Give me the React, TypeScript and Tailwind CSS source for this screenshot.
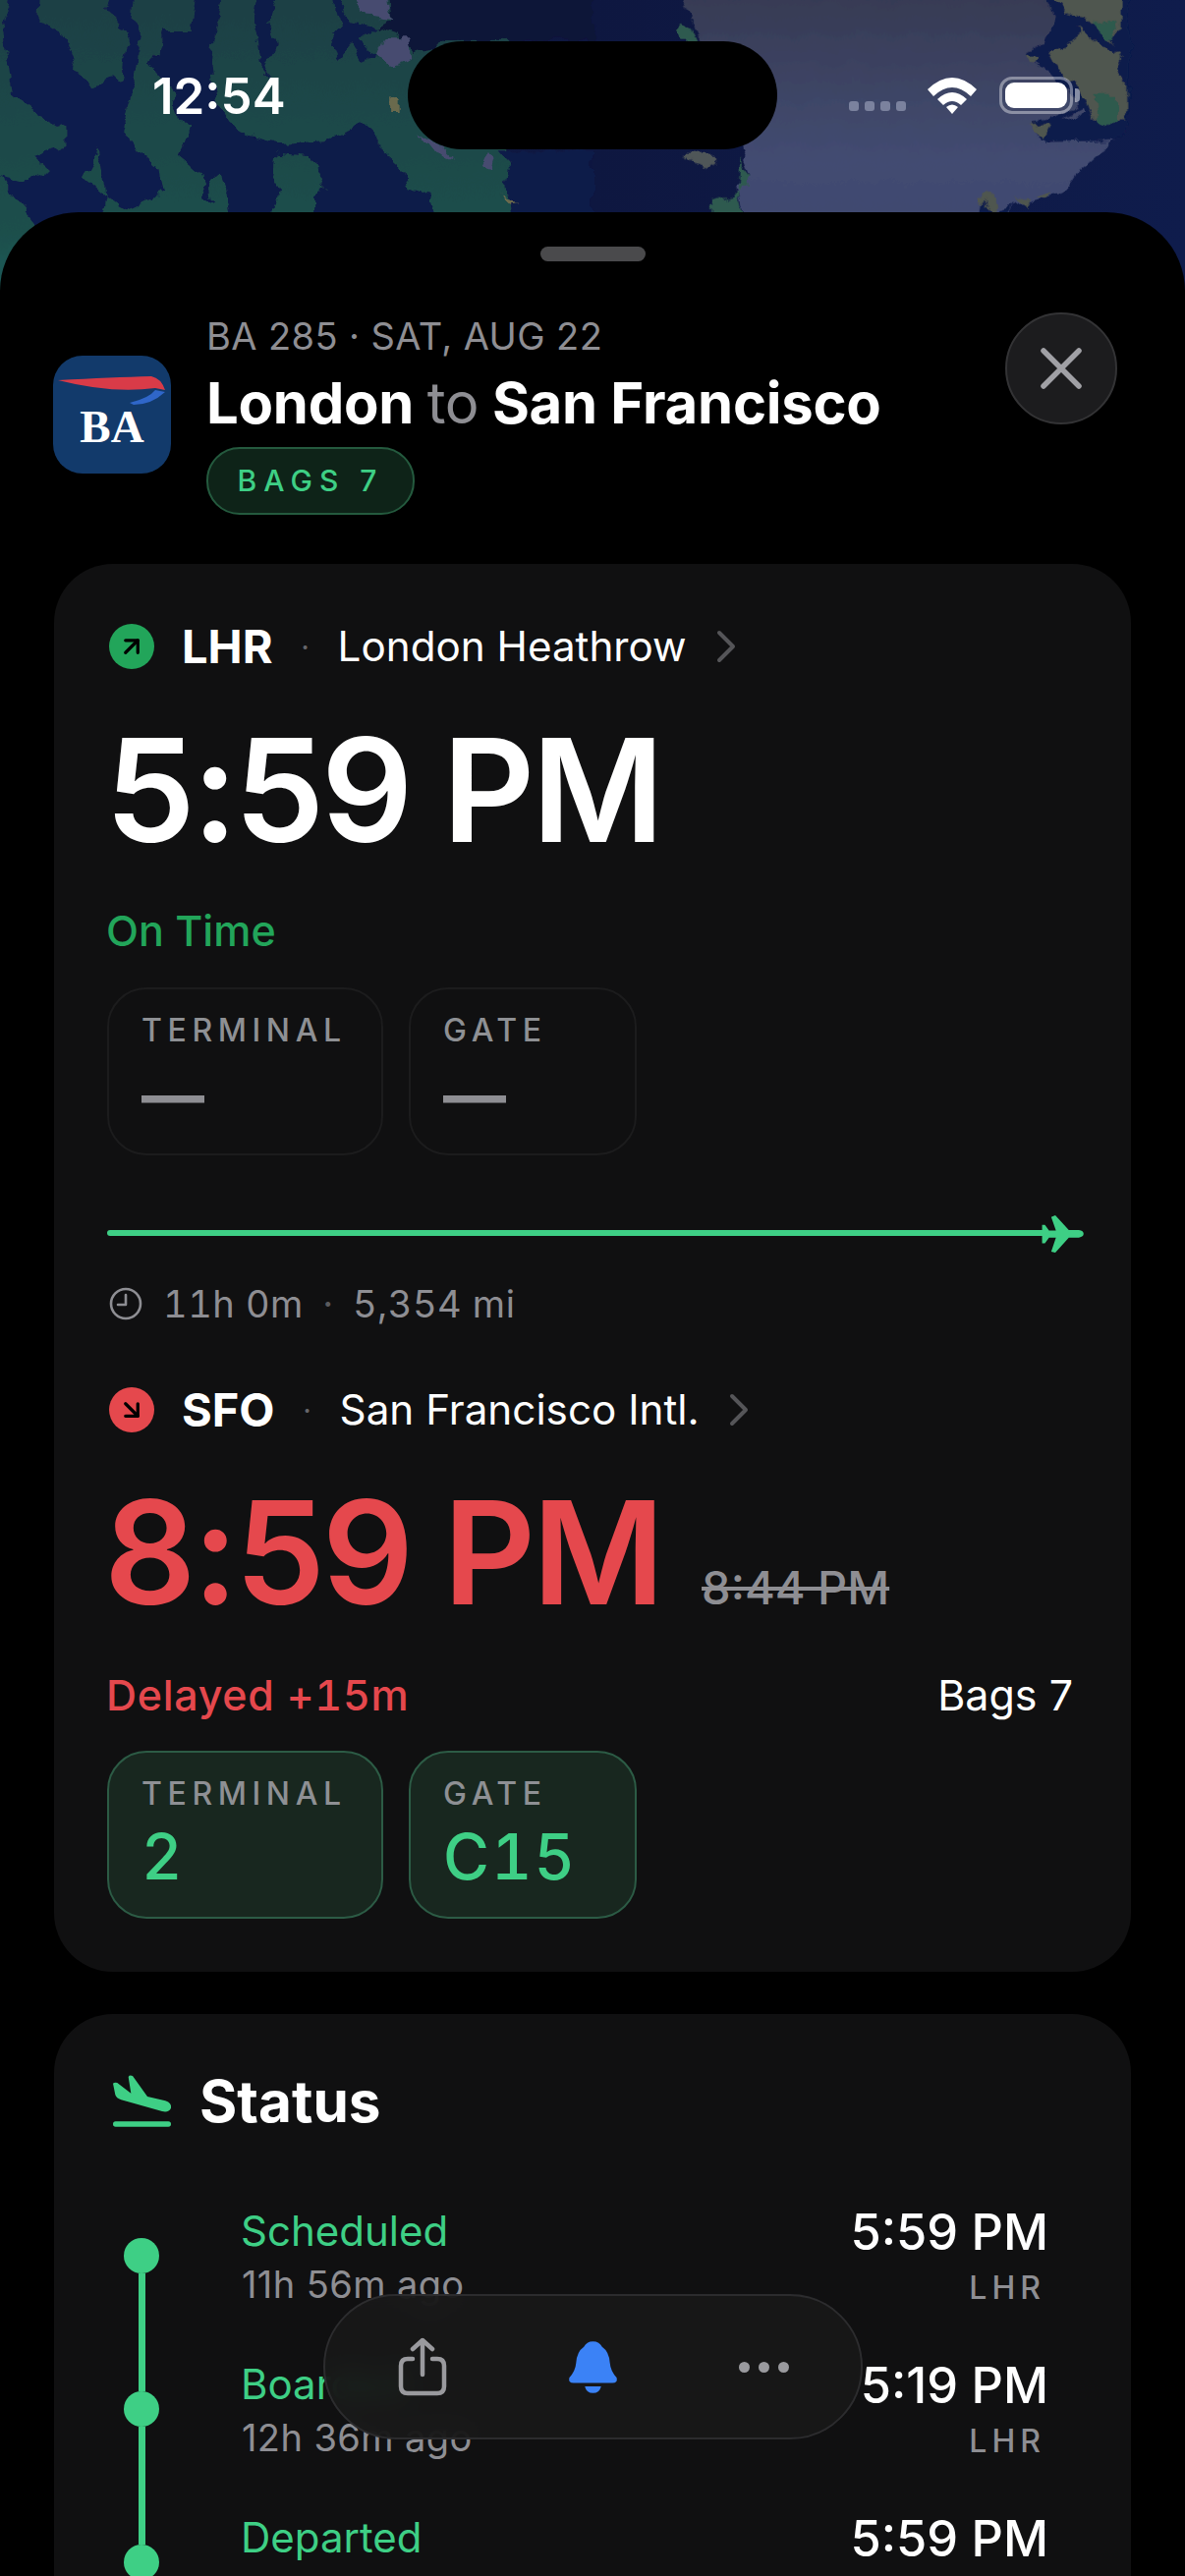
import React from "react";
import { ArrowUpRight, ArrowDownRight } from "lucide-react";

function MapBackdrop() {
  return (
    <svg className="absolute left-0 top-0" width="1206" height="310" viewBox="0 0 1206 310">
      <defs>
        <linearGradient id="lav" x1="0" y1="0" x2="0" y2="1">
          <stop offset="0" stopColor="#363a52" />
          <stop offset="0.7" stopColor="#434c72" />
          <stop offset="1" stopColor="#3f4870" />
        </linearGradient>
        <linearGradient id="navy" x1="0" y1="0" x2="1" y2="0">
          <stop offset="0" stopColor="#111c48" />
          <stop offset="0.5" stopColor="#0e1740" />
          <stop offset="1" stopColor="#0f1c4c" />
        </linearGradient>
        <linearGradient id="land" x1="0" y1="0" x2="0" y2="1">
          <stop offset="0" stopColor="#1b3f44" />
          <stop offset="0.75" stopColor="#1d4f4c" />
          <stop offset="1" stopColor="#1d5f5c" />
        </linearGradient>
        <filter id="rough" x="-5%" y="-5%" width="110%" height="110%">
          <feTurbulence type="fractalNoise" baseFrequency="0.05" numOctaves="4" seed="7" />
          <feDisplacementMap in="SourceGraphic" scale="16" xChannelSelector="R" yChannelSelector="G" />
        </filter>
      </defs>
      <rect width="1206" height="310" fill="url(#navy)" />
      <g filter="url(#rough)">
        <g transform="scale(0.3846 0.3333)">
          <rect x="-40" y="-40" width="1390" height="1000" fill="url(#land)" />
          <path fill="#0d1438" d="M1030 -40 L1568 -40 L1568 125 L1200 125 L1100 170 L1060 110 L990 80 L1040 60 Z" />
          <path fill="#101a48" d="M1320 460 L1568 460 L1568 960 L1370 960 L1340 570 L1350 500 Z" />
          <path fill="#111d4e" d="M10 60 L40 -40 L110 -40 L105 70 L150 90 L190 180 L240 265 L320 240 L330 150 L345 130 L310 60 L270 40 L300 -40 L360 -40 L350 60 L375 130 L360 220 L340 300 L320 400 L370 470 L420 520 L430 590 L330 640 L280 600 L260 460 L220 540 L280 600 L260 720 L120 720 L30 600 L0 540 L60 560 L130 520 L90 480 L170 450 L170 400 L60 320 L40 290 L20 150 Z" />
          <path fill="#0f1a4a" d="M430 90 L500 90 L520 -40 L600 -40 L570 100 L560 200 L570 300 L620 400 L750 440 L860 430 L960 370 L1000 410 L1000 450 L1070 520 L1080 580 L1140 600 L1160 720 L830 720 L830 600 L860 580 L820 480 L730 470 L720 540 L740 580 L700 720 L620 720 L590 530 L550 550 L560 620 L545 600 L530 530 L470 470 L500 400 L470 360 L460 280 L400 200 L430 130 Z" />
          <path fill="#0f1a4a" d="M690 -40 L740 -40 L710 60 L730 130 L700 200 L720 240 L690 200 L680 120 L670 70 Z" />
          <path fill="#0f1a4a" d="M870 -40 L900 10 L920 70 L990 80 L950 120 L1000 170 L960 190 L930 130 L890 180 L870 130 L900 90 Z" />
          <path fill="#464c70" d="M920 -40 L1020 -40 L1040 60 L980 50 Z" />
          <path fill="#464c70" d="M1020 115 L1080 115 L1090 180 L1030 205 L1000 170 Z" />
          <path fill="#464c70" d="M1100 400 L1160 440 L1200 485 L1140 460 Z" />
          <path fill="#464c70" d="M1290 460 L1310 480 L1300 520 L1270 510 Z" />
          <path fill="#6b6a4e" d="M1030 295 L1060 300 L1060 345 L1030 345 Z" />
          <path fill="#6b6a4e" d="M1325 605 L1365 615 L1340 620 Z" />
        </g>
        <g transform="translate(603 0) scale(0.3846 0.3333)">
          <path fill="url(#lav)" d="M225 -40 L1190 -40 L1220 60 L1200 130 L1150 160 L1190 220 L1240 280 L1290 260 L1300 350 L1160 380 L1190 430 L1390 425 L1340 470 L1280 530 L1240 590 L1110 630 L1090 720 L405 720 L380 560 L420 540 L390 450 L290 130 Z" />
          <path fill="#4f5658" d="M240 470 L330 470 L330 500 L295 520 L265 510 Z" />
          <path fill="#2f5a50" d="M390 490 L420 540 L370 600 L320 620 L320 720 L405 720 L385 610 Z" />
          <path fill="#2f5a50" d="M240 60 L265 85 L280 125 L230 125 L215 90 Z" />
          <path fill="#0f1c4c" d="M1190 -40 L1420 -40 L1420 380 L1390 425 L1190 430 L1160 380 L1300 350 L1290 260 L1240 280 L1190 220 L1150 160 L1200 130 L1220 60 Z" />
          <path fill="#50564f" d="M1190 -40 L1400 -40 L1400 100 L1370 120 L1400 170 L1380 210 L1415 260 L1415 370 L1320 370 L1290 260 L1240 230 L1210 160 L1270 130 L1300 100 Z" />
          <path fill="#2d5a4e" d="M1330 290 L1385 290 L1385 375 L1335 375 Z" />
          <path fill="#2d5a4e" d="M1320 70 L1390 60 L1380 120 L1340 120 Z" />
          <path fill="#0f1c4c" d="M1210 30 L1300 50 L1400 160 L1375 170 L1290 80 L1215 50 Z" />
          <path fill="#0f1c4c" d="M1170 170 L1210 200 L1290 250 L1300 330 L1190 390 L1215 440 L1185 420 L1180 370 L1280 330 L1270 270 L1200 230 Z" />
          <path fill="#50564f" d="M1150 160 L1180 175 L1165 195 Z" />
          <path fill="#50564f" d="M1155 385 L1215 380 L1195 425 Z" />
          <path fill="#50564f" d="M1025 600 L1055 590 L1065 640 L1040 650 Z" />
          <path fill="#50564f" d="M1120 610 L1160 605 L1150 630 Z" />
          <path fill="#50564f" d="M1180 595 L1210 590 L1190 610 Z" />
          <path fill="#0f1c4c" d="M1035 610 L1060 640 L1110 625 L1100 660 L1030 660 Z" />
        </g>
      </g>
    </svg>
  );
}

function StatusBar() {
  return (
    <div className="relative flex items-center h-[110px] mt-[42px]">
      <div className="w-[415px] shrink-0 pl-[155px] text-[51px] leading-none font-semibold text-white">12:54</div>
      <div className="w-[376px] h-[110px] rounded-[55px] bg-black shrink-0" />
      <div className="flex items-end gap-[6px] ml-[73px] mt-[21px]">
        <span className="w-[10px] h-[10px] rounded-[3px] bg-[#7b829e]" />
        <span className="w-[10px] h-[10px] rounded-[3px] bg-[#7b829e]" />
        <span className="w-[10px] h-[10px] rounded-[3px] bg-[#7b829e]" />
        <span className="w-[10px] h-[10px] rounded-[3px] bg-[#7b829e]" />
      </div>
      <svg className="ml-[22px]" width="50" height="38" viewBox="0 0 50 38" fill="white">
        <path d="M0 13 Q25 -11 50 13 L44 20 Q25 2 6 20 Z" />
        <path d="M10 23 Q25 9 40 23 L34 29 Q25 21 16 29 Z" />
        <path d="M19 31 Q25 26 31 31 L25 38 Z" />
      </svg>
      <div className="relative ml-[23px] w-[75px] h-[38px] rounded-[13px] border-[3px] border-white/40 p-[3px]">
        <div className="w-full h-full rounded-[9px] bg-white" />
        <span className="absolute right-[-10px] top-[9px] w-[5px] h-[14px] rounded-r-[4px] bg-white/50" />
      </div>
    </div>
  );
}

function BaLogo() {
  return (
    <div className="relative mt-[44px] w-[120px] h-[120px] shrink-0 rounded-[30px] bg-[#123a6b] flex items-end justify-center pb-[24px] overflow-hidden">
      <svg className="absolute left-0 top-0" width="120" height="120" viewBox="0 0 120 120">
        <path fill="#d93b48" d="M5 25 Q60 22 100 21 Q110 23 114 35 L104 33 Q60 39 5 25 Z" />
        <path fill="#2f66c9" d="M114 37 Q100 50 82 50 L78 48 Q98 43 104 35 Z" />
      </svg>
      <span className="font-['Liberation_Serif',serif] text-[47px] leading-[47px] font-bold text-white">BA</span>
    </div>
  );
}

function InfoBox({ label, value, w, active }: { label: string; value: string; w: string; active?: boolean }) {
  const boxClass = active
    ? "h-[171px] rounded-[40px] border-2 border-[#2c5b45] bg-[#18271f] pl-[33px] pt-[22px]"
    : "h-[171px] rounded-[40px] border-2 border-[#1c1c1d] pl-[33px] pt-[22px]";
  return (
    <div className={boxClass} style={{ width: w }}>
      <div className="text-[32px] leading-[40px] font-medium tracking-[5.6px] text-[#8e9094]">{label}</div>
      {active ? (
        <div className="mt-[9px] text-[64px] leading-[70px] font-medium tabular-nums tracking-[2px] text-[#3ecf85]">{value}</div>
      ) : (
        <div className="mt-[11px] text-[64px] leading-[70px] font-bold text-[#8e8e93]">{value}</div>
      )}
    </div>
  );
}

function Chevron() {
  return (
    <svg className="ml-[30px]" width="20" height="34" viewBox="0 0 20 34" fill="none">
      <path d="M3 3 L17 17 L3 31" stroke="#555558" strokeWidth="4" strokeLinecap="round" strokeLinejoin="round" />
    </svg>
  );
}

function AirportRow({ code, name, up }: { code: string; name: string; up?: boolean }) {
  return (
    <div className="flex items-center h-[46px]">
      <div className={up ? "ml-[2px] w-[46px] h-[46px] rounded-full bg-[#22a55a] flex items-center justify-center" : "ml-[2px] w-[46px] h-[46px] rounded-full bg-[#e5484d] flex items-center justify-center"}>
        {up ? <ArrowUpRight size={30} color="#000" strokeWidth={2.6} /> : <ArrowDownRight size={30} color="#000" strokeWidth={2.6} />}
      </div>
      <span className="ml-[28px] text-[47px] leading-[46px] font-bold text-white">{code}</span>
      <span className="w-[66px] text-center text-[30px] leading-[46px] text-[#66666a]">·</span>
      <span className="text-[42.2px] leading-[46px] text-white">{name}</span>
      <Chevron />
    </div>
  );
}

function TimelineRow({ title, sub, time, code, first }: { title: string; sub?: string; time: string; code?: string; first?: boolean }) {
  return (
    <div className="flex h-[156px]">
      <div className="ml-[17px] w-[36px] flex flex-col items-center shrink-0">
        <div className={first ? "w-[7px] h-[34px]" : "w-[7px] h-[34px] bg-[#3ecf85]"} />
        <div className="w-[36px] h-[36px] rounded-full bg-[#3ecf85] shrink-0" />
        <div className="w-[7px] flex-1 bg-[#3ecf85]" />
      </div>
      <div className="ml-[83px] flex-1">
        <div className="text-[42px] leading-[54px] text-[#3ecf85]">{title}</div>
        {sub && <div className="mt-[4px] pl-[1px] text-[38px] leading-[46px] tracking-[0.4px] text-[#8e8e93]">{sub}</div>}
      </div>
      <div className="text-right">
        <div className="text-[50.5px] leading-[56px] font-medium text-white">{time}</div>
        {code && <div className="mt-[9px] pr-[3px] text-[32px] leading-[40px] font-medium tracking-[5px] text-[#8e8e93]">{code}</div>}
      </div>
    </div>
  );
}

export default function App() {
  return (
    <div className="relative w-[1206px] h-[2622px] overflow-hidden bg-black font-['Inter',sans-serif] flex flex-col">
      <MapBackdrop />
      <div className="relative h-[216px] shrink-0 flex flex-col">
        <StatusBar />
      </div>

      <div className="relative flex-1 rounded-t-[80px] bg-black">
        <div className="mx-auto mt-[35px] w-[107px] h-[15px] rounded-full bg-[#4a4a4c]" />

        <header className="flex pl-[54px] pr-[69px] mt-[52px]">
          <BaLogo />
          <div className="ml-[36px] flex-1">
            <div className="text-[38px] leading-[48px] tracking-[0.4px] text-[#8e8e93]">BA 285 · SAT, AUG 22</div>
            <div className="mt-[9px] text-[58px] leading-[70px] font-bold tracking-[-0.25px] text-white">
              London <span className="font-normal text-[#8e8e93]">to</span> San Francisco
            </div>
            <div className="mt-[10px] w-[212px] h-[69px] rounded-[34px] border-2 border-[#245a3e] bg-[#0e2318] flex items-center justify-center text-[30px] font-medium tracking-[7px] text-[#3ecf85]">
              BAGS 7
            </div>
          </div>
          <button className="w-[114px] h-[114px] rounded-full border-2 border-[#333335] bg-[#1c1c1e] flex items-center justify-center shrink-0">
            <svg width="44" height="44" viewBox="0 0 44 44" fill="none">
              <path d="M4 4 L40 40 M40 4 L4 40" stroke="#a0a0a5" strokeWidth="5.5" strokeLinecap="round" />
            </svg>
          </button>
        </header>

        <section className="mx-[55px] mt-[50px] rounded-[60px] bg-[#101011] pl-[54px] pr-[46px] pt-[61px] pb-[54px]">
          <AirportRow code="LHR" name="London Heathrow" up />
          <div className="mt-[50px] ml-[-2px] text-[146px] leading-[146px] font-semibold tracking-[-3.4px] text-white">5:59 PM</div>
          <div className="mt-[43px] ml-[-1px] text-[43px] leading-[54px] font-medium text-[#22a55a]">On Time</div>
          <div className="mt-[31px] flex gap-[26px]">
            <InfoBox label="TERMINAL" value="—" w="281px" />
            <InfoBox label="GATE" value="—" w="232px" />
          </div>

          <div className="mt-[59px] flex items-center h-[40px]">
            <div className="flex-1 h-[6px] rounded-full bg-[#3ecf85]" />
            <svg className="ml-[-6px]" width="46" height="40" viewBox="300 100 140 125" fill="#3ecf85">
              <path d="M303 158 L303 137 L312 137 L325 155 L347 155 L332 112 L345 106 L388 153 L420 153 Q435 155 435 165 Q435 175 420 177 L388 177 L345 225 L332 222 L347 177 L325 177 L312 195 L303 195 Z" />
            </svg>
          </div>

          <div className="mt-[29px] flex items-center h-[46px] text-[38px] leading-[46px] tabular-nums tracking-[0.5px] text-[#8e8e93]">
            <svg className="ml-[2px]" width="34" height="34" viewBox="0 0 34 34" fill="none">
              <circle cx="17" cy="17" r="15" stroke="#8e8e93" strokeWidth="2.6" />
              <path d="M17 8 V18 H9" stroke="#8e8e93" strokeWidth="2.6" strokeLinecap="round" strokeLinejoin="round" />
            </svg>
            <span className="ml-[21px]">11h 0m</span>
            <span className="w-[50px] text-center text-[#5a5a5e]">·</span>
            <span>5,354 mi</span>
          </div>

          <div className="mt-[62px]">
            <AirportRow code="SFO" name="San Francisco Intl." />
          </div>
          <div className="mt-[49px] ml-[-3px] flex items-baseline">
            <span className="text-[146px] leading-[146px] font-semibold tracking-[-3.4px] text-[#e5484d]">8:59 PM</span>
            <span className="ml-[41px] text-[47px] leading-[48px] font-medium text-[#8e8e93] line-through">8:44 PM</span>
          </div>
          <div className="mt-[45px] ml-[-1px] flex justify-between pr-[13px] text-[43px] leading-[54px] font-medium">
            <span className="tabular-nums tracking-[0.7px] text-[#e5484d]">Delayed +15m</span>
            <span className="font-normal text-white">Bags 7</span>
          </div>
          <div className="mt-[30px] flex gap-[26px]">
            <InfoBox label="TERMINAL" value="2" w="281px" active />
            <InfoBox label="GATE" value="C15" w="232px" active />
          </div>
        </section>

        <section className="mx-[55px] mt-[43px] rounded-[60px] bg-[#101011] pl-[54px] pr-[84px] pt-[54px] pb-[40px]">
          <div className="flex items-center h-[70px]">
            <svg className="ml-[-9px] shrink-0" width="90" height="80" viewBox="0 0 270 240" fill="#3ecf85">
              <path d="M45 65 Q50 60 58 63 L100 95 L92 45 Q95 38 105 42 L150 105 L205 118 Q225 125 222 140 Q215 155 195 150 L70 115 Q55 110 52 100 Z" />
              <rect x="45" y="181" width="177" height="16" rx="8" />
            </svg>
            <span className="ml-[13px] text-[58.5px] leading-[70px] font-bold text-white">Status</span>
          </div>
          <div className="mt-[70px]">
            <TimelineRow title="Scheduled" sub="11h 56m ago" time="5:59 PM" code="LHR" first />
            <TimelineRow title="Boarded" sub="12h 36m ago" time="5:19 PM" code="LHR" />
            <TimelineRow title="Departed" time="5:59 PM" />
          </div>
        </section>
      </div>

      <div className="absolute left-[329px] top-[2335px] w-[549px] h-[148px] rounded-full border-2 border-[#2c2c2e] bg-[#181818]/90 backdrop-blur-md flex items-center justify-center">
        <div className="w-[174px] flex justify-center">
          <svg width="50" height="60" viewBox="0 0 50 60" fill="none" stroke="#9a9a9e" strokeWidth="4.5" strokeLinecap="round" strokeLinejoin="round">
            <path d="M15 22 H10 Q3 22 3 29 V50 Q3 57 10 57 H40 Q47 57 47 50 V29 Q47 22 40 22 H35" />
            <path d="M25 38 V3 M15 12 L25 3 L35 12" />
          </svg>
        </div>
        <div className="w-[174px] flex justify-center">
          <svg width="53" height="55" viewBox="560 35 160 165" fill="#3b82f6">
            <path d="M640 38 Q660 38 668 55 Q690 70 692 105 Q694 130 713 150 Q716 166 700 166 H580 Q564 166 567 150 Q586 130 588 105 Q590 70 612 55 Q620 38 640 38 Z" />
            <path d="M615 176 H665 Q660 197 640 197 Q620 197 615 176 Z" />
          </svg>
        </div>
        <div className="w-[174px] flex justify-center gap-[9px]">
          <span className="w-[11px] h-[11px] rounded-full bg-[#9a9a9e]" />
          <span className="w-[11px] h-[11px] rounded-full bg-[#9a9a9e]" />
          <span className="w-[11px] h-[11px] rounded-full bg-[#9a9a9e]" />
        </div>
      </div>
    </div>
  );
}
